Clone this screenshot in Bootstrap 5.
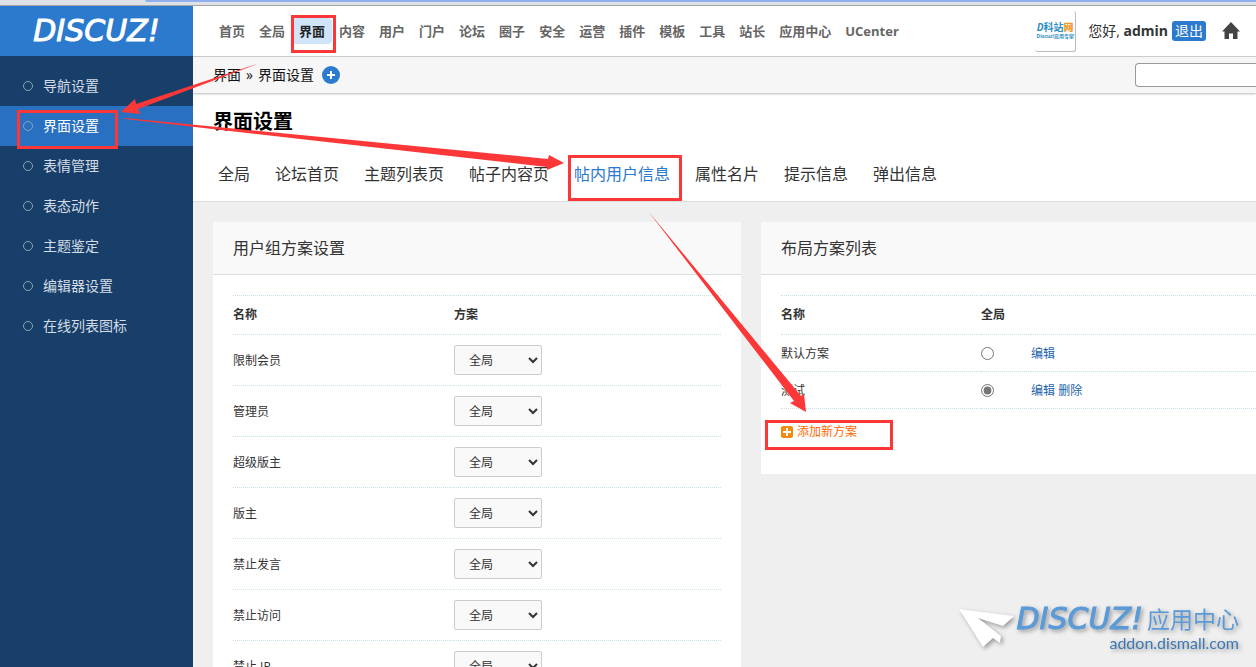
<!DOCTYPE html>
<html lang="zh-CN">
<head>
<meta charset="utf-8">
<meta name="viewport" content="width=device-width, initial-scale=1">
<title>界面设置</title>
<link rel="stylesheet" href="https://cdn.jsdelivr.net/npm/bootstrap@5.3.0/dist/css/bootstrap.min.css">
<style>
body{font-family:"Open Sans","Noto Sans CJK SC",sans-serif;font-size:12px;line-height:20px;color:#333;background:#efefef}
a{text-decoration:none}
.chrome-strip{height:6px;background:#dee1e6;border-bottom:1px solid #a5a5a5;flex:none}
.chrome-strip div{height:2px;margin-left:145px;background:#8fb0ec;border-bottom-left-radius:4px}
.side{width:193px;flex:none;background:#183f69}
.logo{height:50px;background:#2b7acd}
.wordmark{font-family:"DejaVu Sans",sans-serif;font-style:italic;font-weight:400;font-size:30px;line-height:30px;-webkit-text-stroke:1px currentColor}
.logo .wordmark{color:#fff}
.side-menu{padding-top:10px}
.side-menu a{height:40px;padding-left:23px;gap:10px;font-size:14px;color:#d3dce5}
.side-menu a::before{content:"";width:10px;height:10px;border:1px solid #8ca3b9;border-radius:50%}
.side-menu a.active{background:#2970c0;color:#fff}
.topbar{height:51px;border-bottom:1px solid #ccc;padding:0 16px 0 19px}
.topnav{font-size:13px;font-weight:700}
.topnav a{color:#666;padding:3px 7px;line-height:20px}
.topnav a.active{background:#d0e4fa;color:#222;border-radius:4px;}
.who{font-size:14px}
.avatar{width:41px;height:41px;border:solid #bbb;border-width:0 1px 1px 0;border-radius:3px}
.avatar .a1{font-size:10px;line-height:11px;font-weight:700;color:#2f8fc4}
.avatar .a1 b{color:#f19a2c}
.avatar .a2{font-size:5px;line-height:6px;font-weight:700;color:#2f8fc4}
.logout{background:#2b7acd;color:#fff;border-radius:3px;padding:0 3px;margin-left:4px}
.crumbs{height:36px;background:#f6f6f6;box-shadow:0 1px 2px #bbb;padding-left:20px;font-size:14px;color:#111;position:relative}
.crumb-text{gap:5px}
.plus{width:18px;height:18px;border:0;padding:0;background:none;margin-left:3px}
.search{width:121px;height:24px;border:1px solid #999;border-right:0;border-radius:4px 0 0 4px;background:#fff}
.heading{background:#fff;border-bottom:1px solid #ddd;padding:17px 0 14px 20px}
.heading h1{font-size:20px;line-height:24px;font-weight:700;color:#000;margin:0 0 27px}
.tabs{gap:25px;padding-left:5px;font-size:16px;line-height:26px}
.tabs a{color:#333}
.tabs a.active{color:#2b7acd}
.panels{display:grid;grid-template-columns:528fr 495fr;gap:20px;padding:20px 0 0 20px;align-items:start}
.panel{background:#fff}
.panel h2{font-size:16px;line-height:52px;font-weight:400;margin:0;padding-left:20px;background:#f9f9f9;border-bottom:1px solid #ddd}
.panel-in{padding:20px 20px 0}
.plans .panel-in{padding-right:0;padding-bottom:32px}
.grid-table{width:100%;border-top:1px dotted #cbe0e8}
.grid-table th,.grid-table td{border-bottom:1px dotted #cbe0e8;height:51px;padding:0}
.grid-table th{height:39px}
.plans .grid-table td{height:37px}
.grid-table td:first-child,.plans .grid-table td:last-child{padding-top:2px}
.grid-table a{color:#1c63ac}
.c-name{width:221px}
.plans .c-name{width:200px}
.c-radio{width:50px}
.pick{width:88px;height:30px;border:1px solid #ccc;border-radius:2px;background:#f9f9f9;color:#333;padding:0 0 0 10px;font-size:12px;line-height:18px;display:block}
.plans input{width:13px;height:13px;display:block;margin:0;accent-color:#757575}
.add-link{color:#f60;padding-top:13px;gap:4px}
.watermark{position:fixed;right:17px;bottom:16px;filter:drop-shadow(2px 2px 2px #999)}
.watermark .wordmark,.wm-cn{color:#5b9ad8}
.wm-cn{font-size:23px;line-height:30px}
.wm-url{font-family:Lato,sans-serif;font-size:16px;line-height:17px;color:#3d78b4}
.marks{position:absolute;left:0;top:0;pointer-events:none}
</style>
</head>
<body>
<div class="vh-100 d-flex flex-column overflow-hidden position-relative">
  <div class="chrome-strip"><div></div></div>
  <div class="d-flex flex-grow-1 overflow-hidden">
    <aside class="side">
      <div class="logo d-flex align-items-center justify-content-center"><span class="wordmark">DISCUZ!</span></div>
      <nav class="side-menu">
        <a href="#" class="d-flex align-items-center">导航设置</a>
        <a href="#" class="d-flex align-items-center active">界面设置</a>
        <a href="#" class="d-flex align-items-center">表情管理</a>
        <a href="#" class="d-flex align-items-center">表态动作</a>
        <a href="#" class="d-flex align-items-center">主题鉴定</a>
        <a href="#" class="d-flex align-items-center">编辑器设置</a>
        <a href="#" class="d-flex align-items-center">在线列表图标</a>
      </nav>
    </aside>
    <main class="flex-grow-1 overflow-hidden">
      <header class="topbar bg-white d-flex align-items-center justify-content-between text-nowrap">
        <nav class="topnav d-flex">
          <a href="#">首页</a><a href="#">全局</a><a href="#" class="active">界面</a><a href="#">内容</a><a href="#">用户</a><a href="#">门户</a><a href="#">论坛</a><a href="#">圈子</a><a href="#">安全</a><a href="#">运营</a><a href="#">插件</a><a href="#">模板</a><a href="#">工具</a><a href="#">站长</a><a href="#">应用中心</a><a href="#">UCenter</a>
        </nav>
        <div class="who d-flex align-items-center">
          <div class="avatar d-flex flex-column justify-content-center align-items-center overflow-hidden">
            <span class="a1"><i>D</i>科站<b>网</b></span>
            <span class="a2">Discuz!应用专家</span>
          </div>
          <span class="ms-2 ps-1">您好, <b>admin</b></span>
          <a href="#" class="logout">退出</a>
          <a href="#" class="ms-3 d-flex" aria-label="首页"><svg width="18" height="18" viewBox="0 0 18 18"><path d="M9 0 18 9.500H15.500V17H11V11.500H7V17H2.500V9.500H0Z" fill="#444"/></svg></a>
        </div>
      </header>
      <div class="crumbs d-flex align-items-center justify-content-between">
        <div class="crumb-text d-flex align-items-center"><span>界面</span><span>»</span><span>界面设置</span>
          <button class="plus d-flex" aria-label="添加"><svg width="18" height="18" viewBox="0 0 18 18"><circle cx="9" cy="9" r="9" fill="#2b7acd"/><path d="M9 5v8M5 9h8" stroke="#fff" stroke-width="2"/></svg></button>
        </div>
        <input class="search" type="text" aria-label="搜索">
      </div>
      <section class="heading">
        <h1>界面设置</h1>
        <nav class="tabs d-flex text-nowrap">
          <a href="#">全局</a><a href="#">论坛首页</a><a href="#">主题列表页</a><a href="#">帖子内容页</a><a href="#" class="active">帖内用户信息</a><a href="#">属性名片</a><a href="#">提示信息</a><a href="#">弹出信息</a>
        </nav>
      </section>
      <div class="panels">
        <section class="panel">
          <h2>用户组方案设置</h2>
          <div class="panel-in">
            <table class="grid-table">
              <thead><tr><th class="c-name">名称</th><th>方案</th></tr></thead>
              <tbody>
                <tr><td><label for="g1">限制会员</label></td><td><select class="pick" id="g1"><option>全局</option></select></td></tr>
                <tr><td><label for="g2">管理员</label></td><td><select class="pick" id="g2"><option>全局</option></select></td></tr>
                <tr><td><label for="g3">超级版主</label></td><td><select class="pick" id="g3"><option>全局</option></select></td></tr>
                <tr><td><label for="g4">版主</label></td><td><select class="pick" id="g4"><option>全局</option></select></td></tr>
                <tr><td><label for="g5">禁止发言</label></td><td><select class="pick" id="g5"><option>全局</option></select></td></tr>
                <tr><td><label for="g6">禁止访问</label></td><td><select class="pick" id="g6"><option>全局</option></select></td></tr>
                <tr><td><label for="g7">禁止 IP</label></td><td><select class="pick" id="g7"><option>全局</option></select></td></tr>
              </tbody>
            </table>
          </div>
        </section>
        <section class="panel plans">
          <h2>布局方案列表</h2>
          <div class="panel-in">
            <table class="grid-table">
              <thead><tr><th class="c-name">名称</th><th class="c-radio">全局</th><th></th></tr></thead>
              <tbody>
                <tr><td><label for="p1">默认方案</label></td><td><input type="radio" name="plan" id="p1"></td><td><a href="#">编辑</a></td></tr>
                <tr><td><label for="p2">测试</label></td><td><input type="radio" name="plan" id="p2" checked></td><td><a href="#">编辑</a> <a href="#">删除</a></td></tr>
              </tbody>
            </table>
            <a href="#" class="add-link d-flex align-items-center"><svg width="12" height="12" viewBox="0 0 12 12"><rect width="12" height="12" rx="2" fill="#f58a0c"/><path d="M6 2v8M2 6h8" stroke="#fff" stroke-width="2"/></svg>添加新方案</a>
          </div>
        </section>
      </div>
    </main>
  </div>
  <div class="watermark d-flex align-items-center">
    <svg width="58" height="42" viewBox="0 0 58 42"><path d="M0 2 55 9 44 19 19 11 42 29 41 36 34 31 24 40Z" fill="#fff"/></svg>
    <div class="text-end text-nowrap">
      <div class="d-flex align-items-center"><span class="wordmark me-1">DISCUZ!</span><span class="wm-cn">应用中心</span></div>
      <div class="wm-url">addon.dismall.com</div>
    </div>
  </div>
  <svg class="marks" width="900" height="460" viewBox="0 0 900 460" aria-hidden="true">
    <g fill="none" stroke="#fc3737" stroke-width="3">
      <path d="M292.500 16.500h42v35h-42z"/>
      <path d="M18.500 111.500h98v36h-98z"/>
      <path d="M569.500 156.500h111v43h-111z"/>
      <path d="M766.500 421.500h125v27h-125z"/>
    </g>
    <g fill="#fc3737">
      <path d="M257 64 136 104 135 99 121 112 140 114 138 109Z"/>
      <path d="M125 118 548 159 549 155 564 163 547 170 547 167 125 119Z"/>
      <path d="M648 211 801 396 804 394 806 412 790 403 794 401Z"/>
    </g>
  </svg>
</div>
<script src="https://cdn.jsdelivr.net/npm/bootstrap@5.3.0/dist/js/bootstrap.bundle.min.js"></script>
</body>
</html>
